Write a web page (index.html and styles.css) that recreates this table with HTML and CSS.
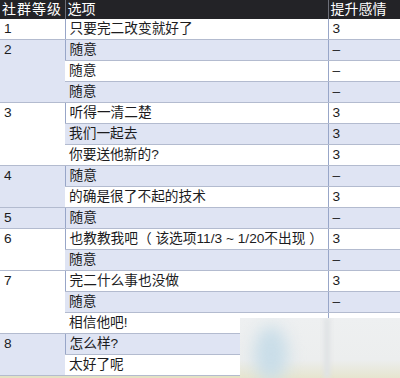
FILE: index.html
```html
<!DOCTYPE html>
<html lang="zh">
<head>
<meta charset="utf-8">
<link rel="stylesheet" href="styles.css">
</head>
<body>
<div class="wrap">
<table class="grid">
<colgroup><col class="c1"><col class="c2"><col class="c3"></colgroup>
<thead>
<tr><th class="h1">社群等级</th><th>选项</th><th>提升感情</th></tr>
</thead>
<tbody>
<tr class="w"><td>1</td><td>只要完二改变就好了</td><td>3</td></tr>
<tr class="b"><td rowspan="3">2</td><td>随意</td><td>–</td></tr>
<tr class="w"><td>随意</td><td>–</td></tr>
<tr class="b"><td>随意</td><td>–</td></tr>
<tr class="w"><td rowspan="3">3</td><td>听得一清二楚</td><td>3</td></tr>
<tr class="b"><td>我们一起去</td><td>3</td></tr>
<tr class="w"><td>你要送他新的?</td><td>3</td></tr>
<tr class="b"><td rowspan="2">4</td><td>随意</td><td>–</td></tr>
<tr class="w"><td>的确是很了不起的技术</td><td>3</td></tr>
<tr class="b"><td>5</td><td>随意</td><td>–</td></tr>
<tr class="w"><td rowspan="2">6</td><td>也教教我吧（ 该选项11/3 ~ 1/20不出现 ）</td><td>3</td></tr>
<tr class="b"><td>随意</td><td>–</td></tr>
<tr class="w"><td rowspan="3">7</td><td>完二什么事也没做</td><td>3</td></tr>
<tr class="b"><td>随意</td><td>–</td></tr>
<tr class="w"><td>相信他吧!</td><td></td></tr>
<tr class="b"><td rowspan="2">8</td><td>怎么样?</td><td></td></tr>
<tr class="w"><td>太好了呢</td><td></td></tr>
</tbody>
</table>
<div class="strip"></div>
<div class="mark"><div class="blob"></div><div class="band"></div></div>
</div>
</body>
</html>
```

FILE: styles.css
```css
html, body {
  margin: 0;
  padding: 0;
  background: #ffffff;
}
.wrap {
  position: relative;
  width: 400px;
  height: 378px;
  overflow: hidden;
}
.grid {
  width: 400px;
  border-collapse: collapse;
  table-layout: fixed;
  font-family: "Liberation Sans", "Noto Sans CJK SC", sans-serif;
  font-size: 13.7px;
  color: #1c1c1e;
}
.c1 { width: 65px; }
.c2 { width: 263px; }
.c3 { width: 72px; }
.grid th {
  background: #232327;
  color: #ffffff;
  font-weight: normal;
  font-size: 14px;
  text-align: left;
  height: 19px;
  padding: 0 2px;
  line-height: 19px;
  border-left: 1px solid #6d6f78;
  white-space: nowrap;
}
.grid th.h1 {
  border-left: none;
  letter-spacing: 1px;
}
.grid td {
  height: 20px;
  padding: 0 0 0 4px;
  line-height: 20px;
  border-bottom: 1px solid #b3bbcf;
  border-left: 1px solid #98a6c8;
  white-space: nowrap;
  vertical-align: middle;
}
.grid tr td:first-child { border-left: none; }
.grid td[rowspan] { vertical-align: top; }
.grid tr.w { background: #ffffff; }
.grid tr.b { background: #dfe4f3; }
.strip {
  height: 2px;
  background: #e4e2c4;
}
.mark {
  position: absolute;
  left: 240px;
  top: 318px;
  width: 160px;
  height: 60px;
  background: linear-gradient(to bottom, #eef0f1 0%, #eceeee 70%, #e6e5cf 100%);
  overflow: hidden;
}
.blob {
  position: absolute;
  left: 14px;
  top: 8px;
  width: 34px;
  height: 56px;
  border-radius: 50%;
  background: #c9dde8;
  filter: blur(8px);
}
.band {
  position: absolute;
  left: 84px;
  top: 0;
  width: 6px;
  height: 60px;
  background: #dfe2e4;
  filter: blur(2px);
}
```
